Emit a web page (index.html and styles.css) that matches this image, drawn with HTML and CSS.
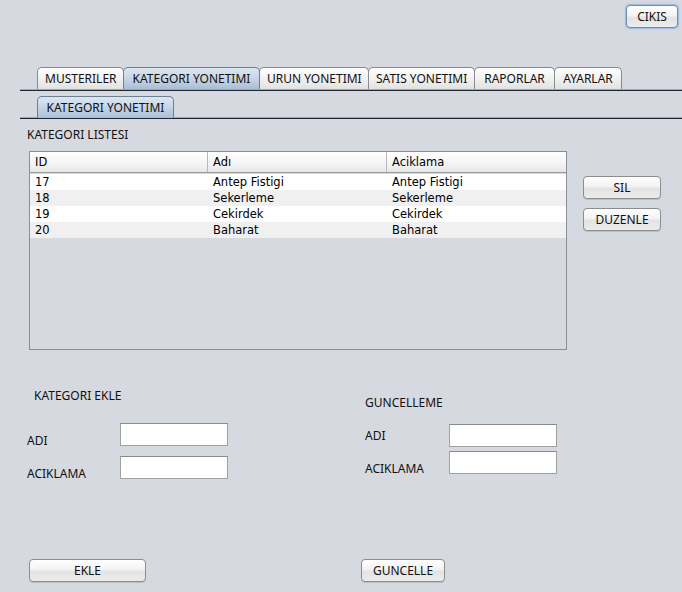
FILE: index.html
```html
<!DOCTYPE html>
<html>
<head>
<meta charset="utf-8">
<link rel="stylesheet" href="styles.css">
</head>
<body>
<div class="app">
  <div class="topbar">
    <button class="btn btn-focus btn-cikis">CIKIS</button>
  </div>

  <div class="tabstrip main-tabs">
    <div class="tab">MUSTERILER</div>
    <div class="tab active">KATEGORI YONETIMI</div>
    <div class="tab">URUN YONETIMI</div>
    <div class="tab">SATIS YONETIMI</div>
    <div class="tab">RAPORLAR</div>
    <div class="tab">AYARLAR</div>
  </div>

  <div class="tabstrip sub-tabs">
    <div class="tab active">KATEGORI YONETIMI</div>
  </div>

  <div class="list-title">KATEGORI LISTESI</div>

  <div class="list-row">
    <div class="table">
      <div class="thead">
        <div class="th">ID</div>
        <div class="th">Adı</div>
        <div class="th">Aciklama</div>
      </div>
      <div class="tr"><div class="td">17</div><div class="td">Antep Fistigi</div><div class="td">Antep Fistigi</div></div>
      <div class="tr alt"><div class="td">18</div><div class="td">Sekerleme</div><div class="td">Sekerleme</div></div>
      <div class="tr"><div class="td">19</div><div class="td">Cekirdek</div><div class="td">Cekirdek</div></div>
      <div class="tr alt"><div class="td">20</div><div class="td">Baharat</div><div class="td">Baharat</div></div>
    </div>
    <div class="side-buttons">
      <button class="btn btn-side">SIL</button>
      <button class="btn btn-side">DUZENLE</button>
    </div>
  </div>

  <div class="forms">
    <div class="form form-add">
      <div class="form-title">KATEGORI EKLE</div>
      <div class="field-row r1"><span class="lbl">ADI</span><input class="input" type="text"></div>
      <div class="field-row r2"><span class="lbl">ACIKLAMA</span><input class="input" type="text"></div>
    </div>
    <div class="form form-upd">
      <div class="form-title">GUNCELLEME</div>
      <div class="field-row r1"><span class="lbl">ADI</span><input class="input" type="text"></div>
      <div class="field-row r2"><span class="lbl">ACIKLAMA</span><input class="input" type="text"></div>
    </div>
  </div>

  <div class="bottom">
    <button class="btn btn-ekle">EKLE</button>
    <button class="btn btn-guncelle">GUNCELLE</button>
  </div>
</div>
</body>
</html>
```

FILE: styles.css
```css
html, body {
  margin: 0;
  padding: 0;
  background: #d6d9df;
}
body {
  font-family: "Noto Sans", "DejaVu Sans", sans-serif;
  font-size: 12px;
  color: #111;
}
.app {
  width: 682px;
  height: 592px;
  overflow: hidden;
}

/* buttons */
.btn {
  font-family: "Noto Sans", "DejaVu Sans", sans-serif;
  font-size: 12px;
  color: #111;
  border: 1px solid #8c8c8c;
  border-radius: 4px;
  background: linear-gradient(#ffffff 0%, #f3f3f3 45%, #e3e3e3 55%, #ececec 100%);
  padding: 0;
  height: 23px;
  line-height: 20px;
  box-shadow: 0 1px 0 rgba(0,0,0,0.12);
  cursor: default;
}
.topbar {
  display: flex;
  justify-content: flex-end;
  padding: 5px 4px 0 0;
  height: 24px;
}
.btn-cikis {
  width: 52px;
  height: 23px;
}
.btn-focus {
  border-color: #6c8cb4;
  box-shadow: 0 0 0 1px #9fc0e4, 0 0 2px 1px #aac8ea;
}

/* tabs */
.tabstrip {
  display: flex;
  margin-left: 20px;
  padding-left: 17px;
  border-bottom: 1px solid #1e2630;
  box-shadow: 0 -1px 0 #98aac0 inset;
}
.main-tabs {
  margin-top: 38px;
  height: 23px;
}
.sub-tabs {
  margin-top: 5px;
  height: 22px;
}
.tab {
  box-sizing: border-box;
  height: 22px;
  line-height: 21px;
  padding: 0 7px;
  text-align: center;
  border: 1px solid #8a8a8a;
  border-bottom: none;
  border-radius: 5px 5px 0 0;
  background: linear-gradient(#ffffff 0%, #f1f1f1 50%, #e2e2e2 100%);
  color: #111;
  margin-right: -1px;
  white-space: nowrap;
}
.main-tabs .tab:nth-child(1) { width: 87px; }
.main-tabs .tab:nth-child(2) { width: 137px; }
.main-tabs .tab:nth-child(3) { width: 110px; }
.main-tabs .tab:nth-child(4) { width: 107px; }
.main-tabs .tab:nth-child(5) { width: 81px; }
.main-tabs .tab:nth-child(6) { width: 68px; }
.sub-tabs .tab { width: 137px; height: 22px; }
.tab.active {
  background: linear-gradient(#dce6f0 0%, #c6d5e6 50%, #a9bfd6 100%);
  border-color: #6f7f92;
  position: relative;
  z-index: 1;
}

/* list */
.list-title {
  margin: 8px 0 0 27px;
  height: 16px;
  line-height: 16px;
}
.list-row {
  display: flex;
  margin-top: 8px;
  margin-left: 29px;
  align-items: flex-start;
}
.table {
  width: 536px;
  height: 197px;
  border: 1px solid #8a8e95;
  background: #d6d9df;
  font-family: "DejaVu Sans", sans-serif;
  font-size: 11.5px;
  color: #000;
}
.thead {
  display: flex;
  height: 20px;
  background: linear-gradient(#ffffff 0%, #f4f4f4 60%, #e6e6e6 100%);
  border-bottom: 1px solid #9a9a9a;
  margin-bottom: 1px;
}
.th, .td {
  flex: 0 0 auto;
  box-sizing: border-box;
  padding-left: 5px;
}
.th {
  line-height: 21px;
  border-right: 1px solid #b8b8b8;
}
.th:nth-child(1), .td:nth-child(1) { width: 178px; }
.th:nth-child(2), .td:nth-child(2) { width: 179px; }
.th:nth-child(3), .td:nth-child(3) { width: 179px; border-right: none; }
.tr {
  display: flex;
  height: 16px;
  line-height: 16px;
  background: #ffffff;
}
.tr.alt { background: #f0f0f0; }

.side-buttons {
  display: flex;
  flex-direction: column;
  gap: 9px;
  margin-left: 16px;
  margin-top: 25px;
}
.btn-side {
  width: 78px;
}

/* forms */
.forms {
  display: flex;
  align-items: flex-start;
  margin-top: 37px;
}
.form-add {
  margin-left: 27px;
  width: 338px;
}
.form-title {
  height: 16px;
  line-height: 16px;
}
.form-add .form-title { padding-left: 7px; margin-top: 1px; }
.form-upd .form-title { margin-top: 8px; }
.field-row {
  display: flex;
  align-items: flex-start;
  height: 23px;
}
.form-add .r1 { margin-top: 19px; }
.form-add .r2 { margin-top: 10px; }
.form-upd .r1 { margin-top: 13px; }
.form-upd .r2 { margin-top: 4px; }
.lbl {
  width: 93px;
  line-height: 16px;
  margin-top: 10px;
}
.form-upd .lbl { width: 84px; }
.form-upd .r1 .lbl { margin-top: 4px; }
.input {
  width: 108px;
  height: 23px;
  box-sizing: border-box;
  border: 1px solid #a0a0a0;
  border-top-color: #8a8a8a;
  background: #ffffff;
  margin: 0;
  padding: 0;
}

/* bottom buttons */
.bottom {
  display: flex;
  margin-top: 80px;
  margin-left: 29px;
}
.btn-ekle { width: 117px; }
.btn-guncelle { width: 84px; margin-left: 215px; }
```
